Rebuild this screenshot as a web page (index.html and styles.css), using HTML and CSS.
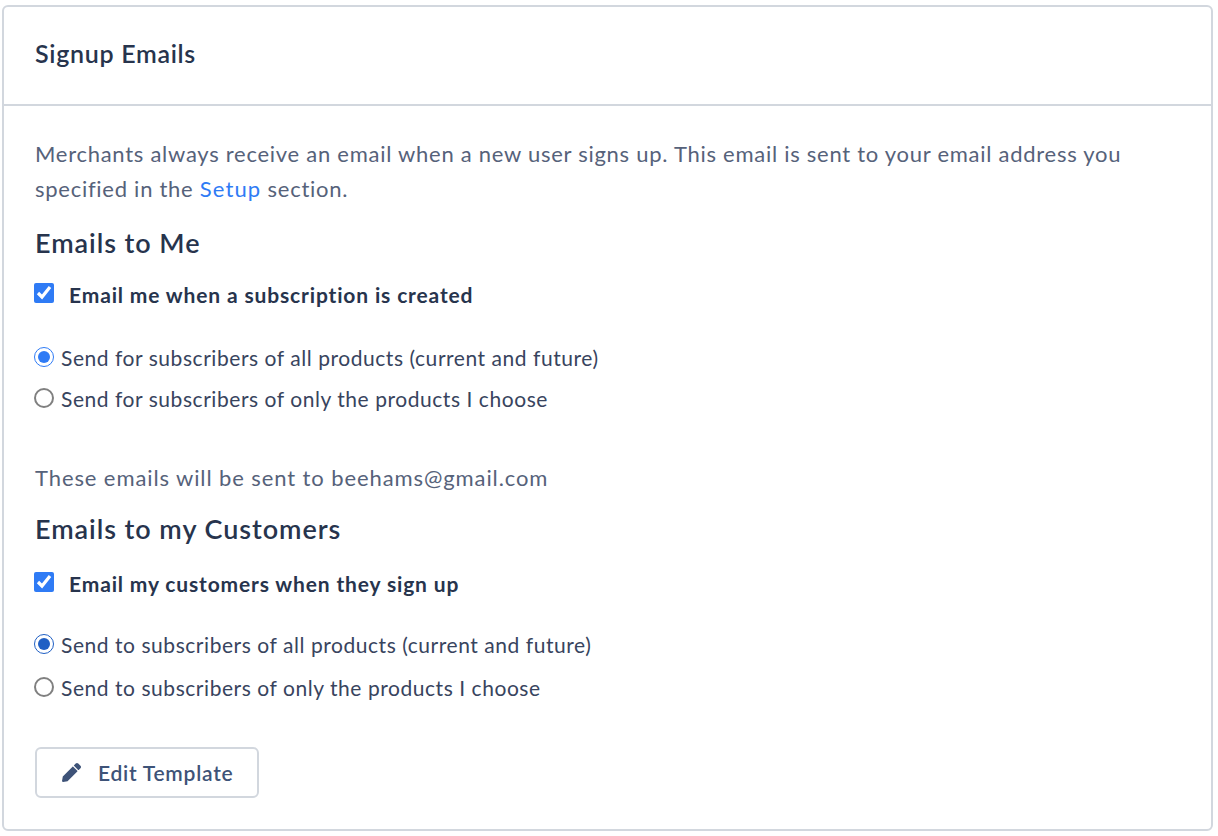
FILE: index.html
```html
<!DOCTYPE html>
<html lang="en">
<head>
    <meta charset="UTF-8">
    <title>Signup Emails</title>
    <link rel="stylesheet" href="styles.css">
</head>
<body>
    <div class="card">
        <div class="card-header">Signup Emails</div>
        <div class="card-body">
            <p class="intro">Merchants always receive an email when a new user signs up. This email is sent to your email address you specified in the <a href="#">Setup</a> section.</p>

            <h2 class="section-title">Emails to Me</h2>
            <label class="check-row">
                <input type="checkbox" checked>
                <span>Email me when a subscription is created</span>
            </label>
            <div class="radio-group">
                <label class="radio-row">
                    <input type="radio" name="me" checked>
                    <span>Send for subscribers of all products (current and future)</span>
                </label>
                <label class="radio-row">
                    <input type="radio" name="me">
                    <span>Send for subscribers of only the products I choose</span>
                </label>
            </div>
            <p class="note">These emails will be sent to beehams@gmail.com</p>

            <h2 class="section-title">Emails to my Customers</h2>
            <label class="check-row spaced">
                <input type="checkbox" checked>
                <span>Email my customers when they sign up</span>
            </label>
            <div class="radio-group customers">
                <label class="radio-row">
                    <input type="radio" name="customers" checked>
                    <span>Send to subscribers of all products (current and future)</span>
                </label>
                <label class="radio-row">
                    <input type="radio" name="customers">
                    <span>Send to subscribers of only the products I choose</span>
                </label>
            </div>

            <button class="edit-button" type="button">
                <svg class="pencil" viewBox="0 0 512 512" aria-hidden="true">
                    <path d="M497.9 142.1l-46.1 46.1c-4.7 4.7-12.3 4.7-17 0l-111-111c-4.7-4.7-4.7-12.3 0-17l46.1-46.1c18.7-18.7 49.1-18.7 67.9 0l60.1 60.1c18.8 18.7 18.8 49.1 0 67.9zM284.2 99.8L21.6 362.4.4 483.9c-2.9 16.4 11.4 30.6 27.8 27.8l121.5-21.3 262.6-262.6c4.7-4.7 4.7-12.3 0-17l-111-111c-4.8-4.7-12.4-4.7-17.1 0z"/>
                </svg>
                Edit Template
            </button>
        </div>
    </div>
</body>
</html>
```

FILE: styles.css
```css
* {
    margin: 0;
    padding: 0;
    box-sizing: border-box;
}

body {
    font-family: "Lato", "Open Sans", sans-serif;
    background: #fff;
    padding: 5px 5px 4px 2px;
}

.card {
    height: 826px;
    border: 2px solid #d2d7de;
    border-radius: 6px;
}

.card-header {
    height: 99px;
    padding: 0 31px 6px;
    display: flex;
    align-items: center;
    border-bottom: 2px solid #d2d7de;
    font-size: 25px;
    font-weight: 600;
    letter-spacing: 0.7px;
    color: #27344d;
}

.card-body {
    padding: 30px 31px 0;
}

.intro {
    font-size: 22px;
    line-height: 35px;
    letter-spacing: 0.73px;
    color: #56627a;
}

.intro a {
    color: #2f7bf5;
    letter-spacing: 1.1px;
    text-decoration: none;
}

.section-title {
    margin-top: 19px;
    font-size: 27px;
    line-height: 36px;
    font-weight: 600;
    letter-spacing: 0.95px;
    color: #27344d;
}

.check-row {
    display: flex;
    align-items: center;
    gap: 15px;
    margin-top: 19px;
    font-size: 21px;
    line-height: 30px;
    font-weight: 700;
    letter-spacing: 0.85px;
    color: #27344d;
}

.check-row.spaced {
    margin-top: 22px;
}

.check-row input {
    width: 20px;
    height: 20px;
    margin: 0 0 5px -1px;
    accent-color: #2f7bf5;
}

.radio-group {
    margin-top: 27px;
}

.radio-row {
    display: flex;
    align-items: center;
    gap: 7px;
    height: 41px;
    font-size: 21px;
    letter-spacing: 0.55px;
    color: #38445e;
}

.radio-row input {
    width: 20px;
    height: 20px;
    margin: 0 0 2px -1px;
    accent-color: #2f7bf5;
}

.radio-row input:not(:checked) {
    appearance: none;
    border: 2px solid #808080;
    border-radius: 50%;
    background: #fff;
}

.customers {
    margin-top: 24px;
}

.customers .radio-row {
    height: 43px;
}

.customers input:checked {
    accent-color: #1f5fc4;
}

.note {
    margin-top: 46px;
    margin-bottom: 20px;
    font-size: 22px;
    line-height: 26px;
    letter-spacing: 0.9px;
    color: #56627a;
}

.edit-button {
    display: flex;
    align-items: center;
    gap: 17px;
    margin-top: 38px;
    width: 224px;
    height: 51px;
    padding-left: 25px;
    background: #fff;
    border: 2px solid #d2d7de;
    border-radius: 6px;
    font-family: inherit;
    font-size: 21px;
    font-weight: 600;
    letter-spacing: 0.75px;
    color: #3e5378;
}

.pencil {
    width: 19px;
    height: 19px;
    fill: #3e5378;
}
```
